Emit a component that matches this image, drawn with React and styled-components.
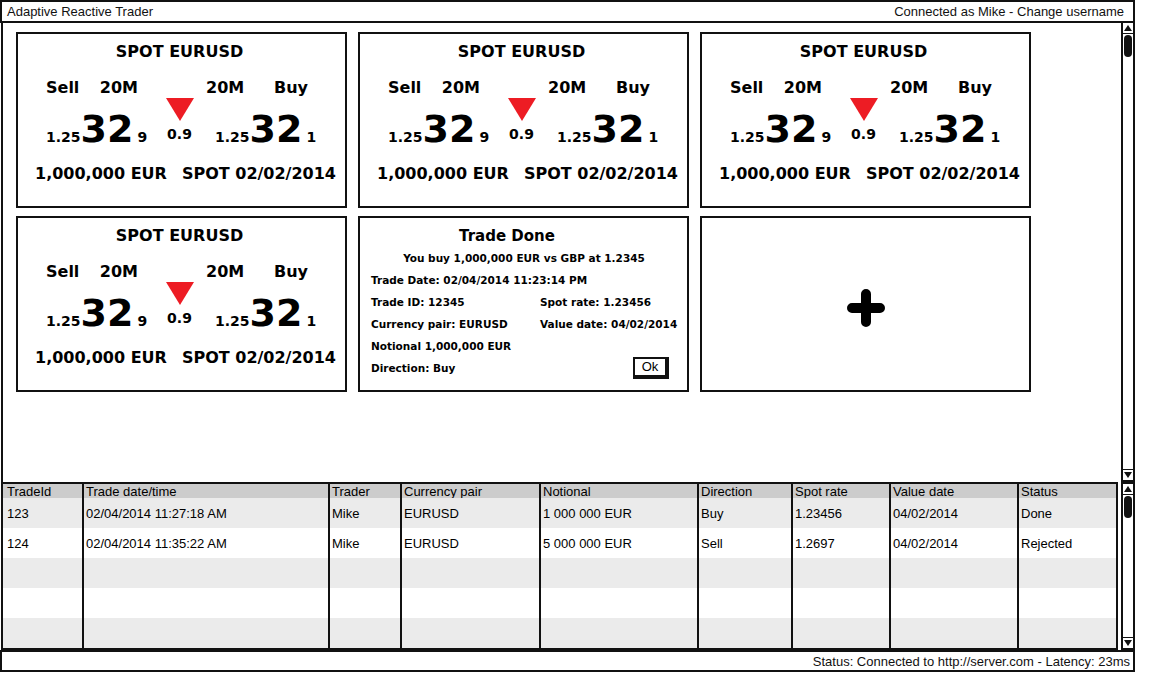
import React from 'react';
import styled, { createGlobalStyle } from 'styled-components';

const INK = '#111';

const Global = createGlobalStyle`
  html, body { margin: 0; padding: 0; background: #fff; }
  body { font-family: "Liberation Sans", Arial, sans-serif; color: ${INK}; }
  * { box-sizing: border-box; }
`;

const Frame = styled.div`
  width: 1135px;
  height: 674px;
  display: flex;
  flex-direction: column;
  background: #fff;
`;

const TitleBar = styled.header`
  height: 23px;
  border: 2px solid ${INK};
  display: flex;
  align-items: center;
  justify-content: space-between;
  padding: 0 9px 0 5px;
  font-size: 13px;
  white-space: nowrap;
`;

const Workspace = styled.div`
  display: flex;
  height: 459px;
  margin-left: 1px;
`;

const TileArea = styled.main`
  flex: 1;
  border-left: 2px solid ${INK};
  padding: 9px 0 0 13px;
  display: grid;
  grid-template-columns: repeat(3, 331px);
  grid-auto-rows: 176px;
  column-gap: 11px;
  row-gap: 8px;
  align-content: start;
`;

const ScrollTrack = styled.div`
  width: 14px;
  flex: none;
  border-left: 2px solid ${INK};
  border-right: 2px solid ${INK};
  border-top: ${p => (p.$boxed ? `2px solid ${INK}` : 'none')};
  border-bottom: 2px solid ${INK};
  display: flex;
  flex-direction: column;
  align-items: center;
  background: #fff;
`;

const ArrowBox = styled.div`
  width: 100%;
  height: 11px;
  flex: none;
  display: flex;
  align-items: center;
  justify-content: center;
  border-bottom: ${p => (p.$down ? 'none' : `1px solid ${INK}`)};
  border-top: ${p => (p.$down ? `1px solid ${INK}` : 'none')};
`;

const Thumb = styled.div`
  width: 8px;
  height: 22px;
  margin-top: 1px;
  border-radius: 4px;
  background: ${INK};
`;

const Spacer = styled.div`
  flex: 1;
`;

const Arrow = ({ down }) => (
  <svg width="8" height="6" viewBox="0 0 8 6">
    <polygon points={down ? '0,0 8,0 4,6' : '4,0 8,6 0,6'} fill={INK} />
  </svg>
);

const Scrollbar = ({ boxed }) => (
  <ScrollTrack $boxed={boxed}>
    <ArrowBox>
      <Arrow />
    </ArrowBox>
    <Thumb />
    <Spacer />
    <ArrowBox $down>
      <Arrow down />
    </ArrowBox>
  </ScrollTrack>
);

/* ---------- tiles ---------- */

const Tile = styled.section`
  border: 2px solid ${INK};
  background: #fff;
  display: flex;
  flex-direction: column;
  overflow: hidden;
  font-family: "DejaVu Sans", "Liberation Sans", sans-serif;
  font-weight: bold;
  color: #000;
`;

const TileTitle = styled.div`
  margin-top: 8px;
  height: 20px;
  line-height: 20px;
  text-align: center;
  font-size: 16px;
  padding-right: 4px;
`;

const Columns = styled.div`
  display: grid;
  grid-template-columns: 147px 33px 147px;
`;

const SideRow = styled(Columns)`
  margin-top: 16px;
  height: 20px;
  line-height: 20px;
  font-size: 16px;
`;

const SideHalf = styled.div`
  display: flex;
  justify-content: space-between;
  padding: ${p => (p.$right ? '0 37px 0 8px' : '0 27px 0 28px')};
  grid-column: ${p => (p.$right ? 3 : 1)};
`;

const PriceRow = styled(Columns)`
  height: 50px;
`;

const PriceHalf = styled.div`
  align-self: end;
  display: flex;
  align-items: baseline;
  padding-left: ${p => (p.$right ? '17px' : '28px')};
`;

const SmallDigits = styled.span`
  font-size: 14px;
  line-height: 16px;
`;

const BigDigits = styled.span`
  font-size: 38px;
  line-height: 37px;
  margin-right: 4px;
`;

const Movement = styled.div`
  display: flex;
  flex-direction: column;
  align-items: center;
  padding-right: 4px;
`;

const Spread = styled.span`
  margin-top: 5px;
  font-size: 14px;
  line-height: 16px;
`;

const InfoRow = styled.div`
  margin-top: 16px;
  height: 20px;
  line-height: 20px;
  font-size: 16px;
  display: flex;
  gap: 15px;
  padding: 0 6px 0 17px;
  white-space: nowrap;
`;

const DownTriangle = () => (
  <svg width="28" height="23" viewBox="0 0 28 23">
    <polygon points="0,0 28,0 14,23" fill="#ed1c24" />
  </svg>
);

const PriceTile = () => (
  <Tile>
    <TileTitle>SPOT EURUSD</TileTitle>
    <SideRow>
      <SideHalf>
        <span>Sell</span>
        <span>20M</span>
      </SideHalf>
      <SideHalf $right>
        <span>20M</span>
        <span>Buy</span>
      </SideHalf>
    </SideRow>
    <PriceRow>
      <PriceHalf>
        <SmallDigits>1.25</SmallDigits>
        <BigDigits>32</BigDigits>
        <SmallDigits>9</SmallDigits>
      </PriceHalf>
      <Movement>
        <DownTriangle />
        <Spread>0.9</Spread>
      </Movement>
      <PriceHalf $right>
        <SmallDigits>1.25</SmallDigits>
        <BigDigits>32</BigDigits>
        <SmallDigits>1</SmallDigits>
      </PriceHalf>
    </PriceRow>
    <InfoRow>
      <span>1,000,000 EUR</span>
      <span>SPOT 02/02/2014</span>
    </InfoRow>
  </Tile>
);

const DoneTile = styled(Tile)`
  padding: 7px 18px 0 11px;
  font-size: 10.5px;
`;

const DoneTitle = styled.div`
  height: 22px;
  line-height: 22px;
  font-size: 15px;
  text-align: center;
  padding-right: 26px;
`;

const DoneLine = styled.div`
  height: 22px;
  line-height: 22px;
  white-space: nowrap;
  text-align: ${p => (p.$center ? 'center' : 'left')};
  margin-right: ${p => (p.$center ? '-8px' : '0')};
`;

const DonePair = styled.div`
  display: grid;
  grid-template-columns: 169px 1fr;
  height: 22px;
  line-height: 22px;
  white-space: nowrap;
`;

const DoneFooter = styled.div`
  display: flex;
  justify-content: space-between;
  align-items: center;
  height: 22px;
`;

const OkButton = styled.button`
  width: 36px;
  height: 22px;
  padding: 0 0 1px 0;
  background: #fff;
  color: #000;
  border: 2px solid ${INK};
  border-right-width: 4px;
  border-bottom-width: 4px;
  font-family: "Liberation Sans", Arial, sans-serif;
  font-size: 13px;
  font-weight: normal;
`;

const TradeDoneTile = () => (
  <DoneTile>
    <DoneTitle>Trade Done</DoneTitle>
    <DoneLine $center>You buy 1,000,000 EUR vs GBP at 1.2345</DoneLine>
    <DoneLine>Trade Date: 02/04/2014 11:23:14 PM</DoneLine>
    <DonePair>
      <span>Trade ID: 12345</span>
      <span>Spot rate: 1.23456</span>
    </DonePair>
    <DonePair>
      <span>Currency pair: EURUSD</span>
      <span>Value date: 04/02/2014</span>
    </DonePair>
    <DoneLine>Notional 1,000,000 EUR</DoneLine>
    <DoneFooter>
      <span>Direction: Buy</span>
      <OkButton>Ok</OkButton>
    </DoneFooter>
  </DoneTile>
);

const AddTile = styled(Tile)`
  align-items: center;
  justify-content: center;
  padding-top: 8px;
`;

const PlusIcon = () => (
  <svg width="38" height="38" viewBox="0 0 38 38">
    <path d="M19 5 V33 M5 19 H33" stroke="#000" strokeWidth="10" strokeLinecap="round" />
  </svg>
);

/* ---------- blotter ---------- */

const COLS = '79px 246px 72px 139px 158px 94px 98px 128px 99px';

const BlotterSection = styled.div`
  display: flex;
  height: 168px;
  margin-left: 1px;
  gap: 3px;
`;

const Blotter = styled.div`
  width: 1117px;
  flex: none;
  border: 2px solid ${INK};
  display: flex;
  flex-direction: column;
  font-size: 13px;
  color: #000;
`;

const BlotterRow = styled.div`
  display: grid;
  grid-template-columns: ${COLS};
  height: ${p => (p.$header ? '14px' : '30px')};
  background: ${p => (p.$header ? '#cccccc' : p.$shade ? '#ebebeb' : '#ffffff')};
`;

const Cell = styled.div`
  display: flex;
  align-items: center;
  padding-left: 2px;
  white-space: nowrap;
  overflow: hidden;
  border-left: 2px solid ${INK};
  &:first-child {
    border-left: none;
    padding-left: 4px;
  }
`;

const StatusBar = styled.footer`
  height: 22px;
  border: 2px solid ${INK};
  display: flex;
  align-items: center;
  justify-content: flex-end;
  padding-right: 3px;
  font-size: 13px;
  white-space: nowrap;
`;

const headers = ['TradeId', 'Trade date/time', 'Trader', 'Currency pair', 'Notional', 'Direction', 'Spot rate', 'Value date', 'Status'];
const trades = [
  ['123', '02/04/2014 11:27:18 AM', 'Mike', 'EURUSD', '1 000 000 EUR', 'Buy', '1.23456', '04/02/2014', 'Done'],
  ['124', '02/04/2014 11:35:22 AM', 'Mike', 'EURUSD', '5 000 000 EUR', 'Sell', '1.2697', '04/02/2014', 'Rejected'],
  Array(9).fill(''),
  Array(9).fill(''),
  Array(9).fill(''),
];

export default function App() {
  return (
    <>
      <Global />
      <Frame>
        <TitleBar>
          <span>Adaptive Reactive Trader</span>
          <span>Connected as Mike - Change username</span>
        </TitleBar>
        <Workspace>
          <TileArea>
            <PriceTile />
            <PriceTile />
            <PriceTile />
            <PriceTile />
            <TradeDoneTile />
            <AddTile>
              <PlusIcon />
            </AddTile>
          </TileArea>
          <Scrollbar />
        </Workspace>
        <BlotterSection>
          <Blotter>
            <BlotterRow $header>
              {headers.map(h => (
                <Cell key={h}>{h}</Cell>
              ))}
            </BlotterRow>
            {trades.map((row, i) => (
              <BlotterRow key={i} $shade={i % 2 === 0}>
                {row.map((v, j) => (
                  <Cell key={j}>{v}</Cell>
                ))}
              </BlotterRow>
            ))}
          </Blotter>
          <Scrollbar boxed />
        </BlotterSection>
        <StatusBar>Status: Connected to http://server.com - Latency: 23ms</StatusBar>
      </Frame>
    </>
  );
}
